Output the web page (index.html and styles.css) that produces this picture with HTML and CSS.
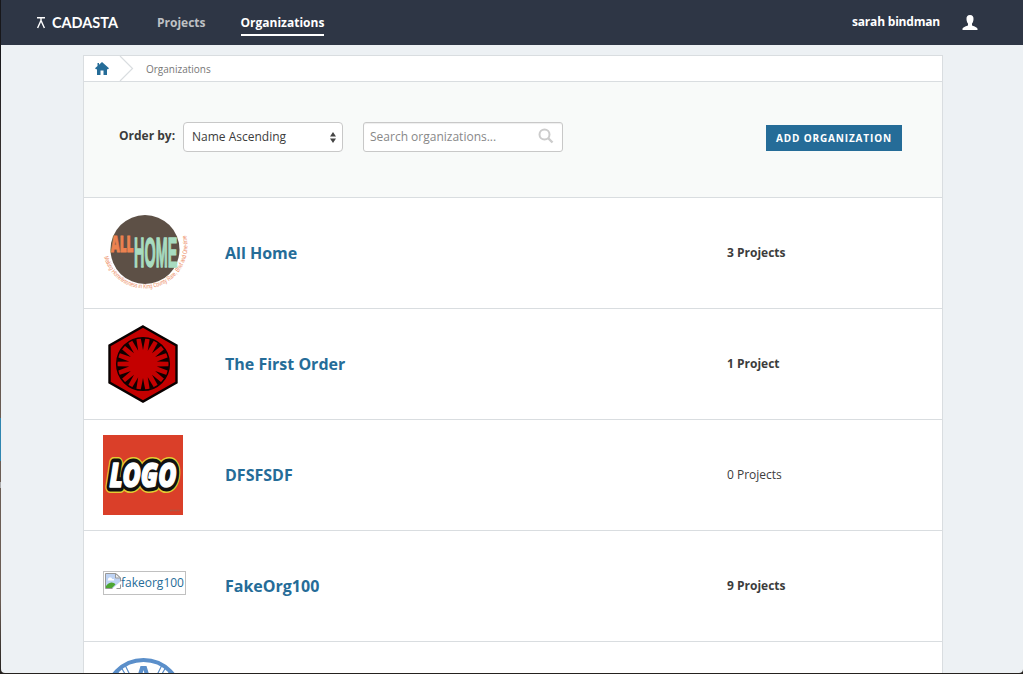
FILE: index.html
```html
<!DOCTYPE html>
<html lang="en">
<head>
<meta charset="utf-8">
<title>Organizations</title>
<link rel="stylesheet" href="styles.css">
</head>
<body>
<div class="window">
  <header class="navbar">
    <a class="brand"><svg width="84" height="20" viewBox="0 0 84 20"><path d="M1 1.700H9M1.600 12L5 4.500L8.400 12M5 2V6" fill="none" stroke="#fff" stroke-width="1.400"/><text x="16" y="12" class="brand-text" textLength="66" lengthAdjust="spacingAndGlyphs">CADASTA</text></svg></a>
    <nav class="nav"><a class="nav-link">Projects</a><a class="nav-link active">Organizations</a></nav>
    <div class="user"><span>sarah bindman</span><svg width="16" height="16" viewBox="0 0 16 16"><path d="M8 0C5.300 0 4.300 1.700 4.500 4.200C4.600 6.500 5.400 7.900 6 8.600V10.200C5 11.300 0.500 11.800 0.500 14V15H15.500V14C15.500 11.800 11 11.300 10 10.200V8.600C10.600 7.900 11.400 6.500 11.500 4.200C11.700 1.700 10.700 0 8 0Z" fill="#fff"/></svg></div>
  </header>
  <main class="panel">
    <div class="breadcrumb">
      <svg class="home" width="14" height="13" viewBox="0 0 14 13"><path d="M7 0L14 6.300L13 7.300H12V13H8.500V8.500H5.500V13H2V7.300H1L0 6.300L2.500 4V1H4V2.700Z" fill="#256c98"/></svg>
      <svg class="chevron" width="15" height="25" viewBox="0 0 15 25"><path d="M1 0L13.500 12.500L1 25" fill="none" stroke="#d9dde0" stroke-width="1.200"/></svg>
      <span>Organizations</span>
    </div>
    <div class="toolbar">
      <span class="order-label">Order by:</span>
      <div class="select"><span>Name Ascending</span><svg width="6" height="11" viewBox="0 0 6 11"><path d="M0 4.500L3 0L6 4.500ZM0 6.500H6L3 11Z" fill="#444"/></svg></div>
      <div class="search"><span>Search organizations...</span><svg width="16" height="16" viewBox="0 0 16 16"><circle cx="6.500" cy="6.500" r="5" fill="none" stroke="#ccc" stroke-width="2"/><path d="M10 10L14.500 14.500" stroke="#ccc" stroke-width="2.400"/></svg></div>
      <a class="add">ADD ORGANIZATION</a>
    </div>
    <div class="row">
      <div class="logo"><svg width="84" height="80" viewBox="0 0 84 80">
        <defs><path id="ring" d="M1 44A41 41 0 0 0 83 22"/></defs>
        <circle cx="42" cy="36.500" r="34.500" fill="#5d5046"/>
        <text class="poster" transform="translate(8 38.500) scale(.5 1)" font-size="22" textLength="45" lengthAdjust="spacingAndGlyphs" fill="#ec8250" stroke="#ec8250">ALL</text>
        <g class="tall" fill="#a8dcc0">
          <text transform="translate(31 53.500) scale(.42 1)" font-size="42" textLength="103" lengthAdjust="spacingAndGlyphs">HOME</text>
        </g>
        <text class="motto"><textPath href="#ring" textLength="133" lengthAdjust="spacingAndGlyphs">Making Homelessness in King County Rare, Brief and One-time</textPath></text>
      </svg></div>
      <a class="name">All Home</a><span class="count">3 Projects</span>
    </div>
    <div class="row">
      <div class="logo"><svg width="80" height="80" viewBox="-40 -40 80 80">
        <path d="M0 -37.500L33.500 -18.500V18.500L0 37.500L-33.500 18.500V-18.500Z" fill="#c40000" stroke="#080000" stroke-width="2.400"/>
        <circle r="26.300" fill="none" stroke="#100000" stroke-width="1.500"/>
        <g fill="#100000">
          <g id="quarter"><path id="ray" d="M0 -14L2.300 -26H-2.300Z"/><use href="#ray" transform="rotate(20)"/><use href="#ray" transform="rotate(40)"/><use href="#ray" transform="rotate(60)"/><use href="#ray" transform="rotate(80)"/><use href="#ray" transform="rotate(100)"/></g>
          <use href="#quarter" transform="rotate(120)"/><use href="#quarter" transform="rotate(240)"/>
        </g>
      </svg></div>
      <a class="name">The First Order</a><span class="count">1 Project</span>
    </div>
    <div class="row">
      <div class="logo"><svg width="80" height="80" viewBox="0 0 80 80">
        <rect width="80" height="80" fill="#da3f29"/>
        <g class="toy" transform="translate(6.500 52)">
          <text textLength="67" lengthAdjust="spacingAndGlyphs" stroke="#e5cc32" stroke-width="12">LOGO</text>
          <text textLength="67" lengthAdjust="spacingAndGlyphs" stroke="#111" stroke-width="9">LOGO</text>
          <text textLength="67" lengthAdjust="spacingAndGlyphs" stroke="#fff" stroke-width="1.500">LOGO</text>
        </g>
        <path d="M67 75.500H77" stroke="#a85a48" stroke-width="1.500" stroke-dasharray="2 .5"/>
      </svg></div>
      <a class="name">DFSFSDF</a><span class="count none">0 Projects</span>
    </div>
    <div class="row">
      <div class="logo"><div class="missing"><svg width="16" height="16" viewBox="0 0 16 16"><path d="M.5 .5H11L15.500 5V15.500H.5Z" fill="#fff" stroke="#999"/><path d="M1 1H10.500V5H15V11L9 15H1Z" fill="#bed3f4"/><path d="M3 6.500C3 4 7 4 7 6H9V7.500H2.500Z" fill="#fff"/><path d="M1 15V13C5 8.500 8 9 10.500 11.500L7 15Z" fill="#4da634"/><path d="M7 16L16 8V11L11 16Z" fill="#fff"/><path d="M10.500 .5V5H15.500Z" fill="#eee" stroke="#999"/></svg><span>fakeorg100</span></div></div>
      <a class="name">FakeOrg100</a><span class="count">9 Projects</span>
    </div>
    <div class="row">
      <div class="logo"><svg width="80" height="80" viewBox="0 0 80 80">
        <circle cx="40.500" cy="40.500" r="37.500" fill="#fff" stroke="#5b8fca" stroke-width="4"/>
        <path d="M18 10L25 22M22 8L28 20M14 14L22 26M63 10L56 22M59 8L53 20M67 14L59 26" stroke="#5b8fca" stroke-width="1.200"/>
        <path d="M37.500 9H43.500L50 30H45.500L44 24H37L35.500 30H31ZM40.500 13L38.500 20H42.500Z" fill="#5b8fca" fill-rule="evenodd"/>
      </svg></div>
      <a class="name"></a><span class="count"></span>
    </div>
  </main>
</div>
</body>
</html>
```
FILE: styles.css
```css
* { box-sizing: border-box; }
body {
  margin: 0;
  height: 674px;
  overflow: hidden;
  padding: 0 0 1px 1px;
  background: linear-gradient(#17171a 0 45px, #4f453f 250px, #6b5d54 418px, #2f86b0 418px 461px, #6b5d54 461px 482px, #aaa 482px 488px, #6b5d54 488px 600px, #25221f 673px);
  font: 12px/18px "Open Sans", "Noto Sans", sans-serif;
  color: #3c3c3c;
}
.window {
  height: 673px;
  overflow: hidden;
  background: #edf1f4;
  border-radius: 0 0 4px 4px;
}
.navbar {
  height: 45px;
  display: flex;
  align-items: flex-start;
  padding: 0 45px 0 35px;
  background: #2e3645;
  color: #fff;
  font-weight: 700;
}
.brand { display: flex; width: 121px; padding-top: 16px; }
.brand-text { font: 700 14.5px Lato, sans-serif; fill: #fff; }
.nav { display: flex; gap: 35px; padding-top: 14px; }
.nav-link { height: 22px; color: #bfc1c4; }
.nav-link.active { color: #fff; border-bottom: 2px solid #fff; }
.user { display: flex; gap: 22px; margin-left: auto; padding-top: 13px; letter-spacing: -.2px; }
.user svg { margin-top: 2px; }
.panel {
  width: 860px;
  margin: 10px 0 0 82px;
  background: #fff;
  border: 1px solid #d9dde0;
}
.breadcrumb {
  height: 26px;
  display: flex;
  align-items: center;
  padding-left: 11px;
  border-bottom: 1px solid #d9dde0;
  font-size: 10px;
  color: #777;
}
.chevron { margin: 0 12px 0 10px; }
.breadcrumb span { padding-top: 1px; }
.toolbar {
  height: 116px;
  display: flex;
  align-items: flex-start;
  padding: 40px 40px 0 35px;
  background: #f8faf9;
  border-bottom: 1px solid #d9dde0;
}
.order-label { width: 64px; padding-top: 5px; font-weight: 700; white-space: nowrap; }
.select, .search {
  height: 30px;
  display: flex;
  align-items: center;
  justify-content: space-between;
  background: #fff;
  border: 1px solid #c8c8c8;
  border-radius: 4px;
  white-space: nowrap;
}
.select { width: 160px; padding: 0 6px 0 8px; }
.search { width: 200px; margin-left: 20px; padding: 0 8px 0 6px; border-radius: 3px; color: #888; box-shadow: inset 0 1px 1px #eee; }
.search svg { margin-top: -3px; }
.add {
  width: 136px;
  height: 26px;
  margin: 3px 0 0 auto;
  background: #256c98;
  color: #fff;
  font-size: 10px;
  font-weight: 700;
  line-height: 27px;
  letter-spacing: .85px;
  text-align: center;
  white-space: nowrap;
}
.row {
  height: 111px;
  display: grid;
  grid-template-columns: 122px 502px 1fr;
  align-items: center;
  padding-left: 19px;
  border-bottom: 1px solid #d9dde0;
}
.logo svg { display: block; overflow: visible; }
.name { color: #256c98; font-size: 16px; font-weight: 700; line-height: 24px; }
.count { font-size: 12px; font-weight: 700; }
.count.none { font-weight: 400; }
.poster { font-family: "Open Sans", sans-serif; font-weight: 800; }
.tall { font-family: "Liberation Sans", sans-serif; font-weight: 700; stroke: #a8dcc0; stroke-width: 1.5px; }
.motto { font: 6.5px "Liberation Sans", sans-serif; fill: #ec8a60; }
.toy { font: italic 800 33px "Open Sans", sans-serif; fill: #fff; stroke-linejoin: round; }
.missing {
  width: 83px;
  height: 24px;
  display: flex;
  margin-top: -6px;
  padding: 1px;
  border: 1px solid #c0c0c0;
  color: #256c98;
  line-height: 20px;
}
```
